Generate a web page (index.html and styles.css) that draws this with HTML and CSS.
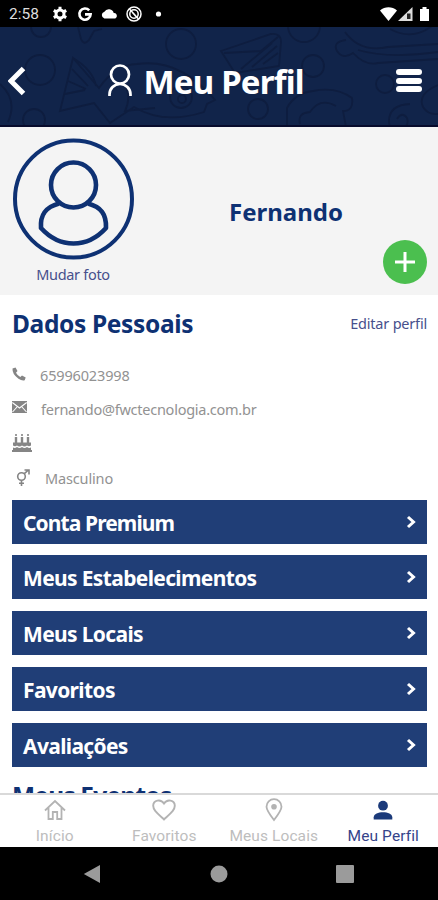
FILE: index.html
```html
<!DOCTYPE html>
<html lang="pt-BR">
<head>
  <meta charset="UTF-8" />
  <meta name="viewport" content="width=device-width, initial-scale=1.0"/>
  <title>Meu Perfil</title>
  <link rel="stylesheet" href="styles.css">
</head>
<body>
  <div class="status-bar">
    <span class="clock">2:58</span>
    <svg class="status-left" width="112" height="18" viewBox="0 0 112 18">
      <!-- settings -->
      <circle cx="9" cy="9" r="4" fill="none" stroke="#fff" stroke-width="3"/>
      <path d="M9 1.8v3M9 13.2v3M2.8 5.4l2.5 1.5M12.7 11.1l2.5 1.5M2.8 12.6l2.5-1.5M12.7 6.9l2.5-1.5" stroke="#fff" stroke-width="3"/>
      <!-- google -->
      <path d="M38.2 5.4A5.6 5.6 0 1 0 39.6 9.3H34" fill="none" stroke="#fff" stroke-width="2.7"/>
      <path d="M53.4 13.4a3.4 3.4 0 0 1 0-6.6 5 5 0 0 1 9.3 1.3 2.8 2.8 0 0 1 1.6 5.3z" fill="#fff"/>
      <circle cx="83" cy="9" r="7" fill="none" stroke="#fff" stroke-width="1.5"/>
      <circle cx="83" cy="9" r="4.2" fill="none" stroke="#fff" stroke-width="1.5"/>
      <path d="M78.500 4l9 10M81.500 7.500l3.500 4" stroke="#fff" stroke-width="1.5"/>
      <circle cx="107.500" cy="9" r="2.600" fill="#fff"/>
    </svg>
    <svg class="status-right" width="52" height="18" viewBox="0 0 52 18">
      <path d="M1 5.500C6 1.200 13 1.200 18 5.500L9.500 16z" fill="#fff"/>
      <path d="M19 16L33.500 2V16z" fill="#ddd"/>
      <path d="M28 8.500h3.500v5.500h-3.500z" fill="#222"/>
      <path d="M41 4h2.500V2h4v2H50v12h-9z" fill="#fff"/>
    </svg>
  </div>

  <header class="header">
    <!-- food doodles behind the title -->
    <svg class="doodles" width="438" height="100" viewBox="0 0 438 100">
      <circle cx="40" cy="43" r="15"/><circle cx="41" cy="0" r="10"/><circle cx="34" cy="93" r="11"/>
      <circle cx="181" cy="17" r="15"/><circle cx="304" cy="-1" r="16"/><circle cx="313" cy="39" r="11"/>
      <circle cx="385" cy="57" r="9"/><circle cx="258" cy="82" r="10"/><circle cx="181" cy="70" r="11"/><circle cx="182" cy="72" r="4"/>
      <path d="M0 57q18 16 8 38M73 31l-13 53 34-8 16 20 24-16q30 18 70 5l3-8 8-4q-35-42-78-36-22 1-38 24zM73 31q20 12 23 28M72 42l16 17M68 54l18 8M65 67l20-4M115 46q20 16 10 38l30-3"/>
      <path d="M78 0l3 12q3 7 8 1l5-9 8-2"/>
      <path d="M221 24l50-17q10-1 10 8l-2 24-44 7-14-22zM224 26l37-2 17-14M241 42l31-26M252 40l25-21M263 37l15-11"/>
      <path d="M345 5q15 21 43 15l50-3M346 13q-14 2-9 11 6 9 16 2 12 13 25 10l60-4M390 2q22 12 42-3M358 23q30 9 80 2"/>
      <path d="M287 98v-17q8-15 26-17 23-5 39 7 2 13-9 13l3 16M300 97q-3-11 10-12 10-15 26-6M438 58q-21 9-15 22 5 8 15 7M410 77q-21 1-21 17 0 10 10 8 11-2 8-11-5-7-10 1"/>
    </svg>
    <svg class="back" width="18" height="30" viewBox="0 0 18 30"><path d="M15.500 2.500L3 15l12.500 12.500" fill="none" stroke="#fff" stroke-width="5"/></svg>
    <div class="title">
      <svg width="24" height="33" viewBox="0 0 24 33"><path d="M1.500 32V30.500A10.500 10.500 0 0 1 22.500 30.500V32" fill="none" stroke="#fff" stroke-width="2.700"/><circle cx="12" cy="10.500" r="9" fill="#11244a" stroke="#fff" stroke-width="2.700"/></svg>
      <h1>Meu Perfil</h1>
    </div>
    <div class="burger"><i></i><i></i><i></i></div>
  </header>

  <section class="profile">
    <div class="photo">
      <svg width="122" height="122" viewBox="0 0 122 122" fill="none" stroke="#0e3173">
        <circle cx="61.500" cy="61" r="58.500" stroke-width="4"/>
        <circle cx="61.500" cy="47" r="22.500" stroke-width="4.600"/>
        <path d="M47 65.500C34 69 28 76 29 90Q43 105.500 61.500 105.500T94 90C94.500 76 89 69 76 65.500" stroke-width="4.600" stroke-linejoin="round"/>
      </svg>
      <span class="change">Mudar foto</span>
    </div>
    <h2 class="name">Fernando</h2>
    <button class="add"><svg width="22" height="22" viewBox="0 0 22 22"><path d="M11 1v20M1 11h20" stroke="#fff" stroke-width="3"/></svg></button>
  </section>

  <main class="content">
    <div class="section-head">
      <h2>Dados Pessoais</h2>
      <a class="edit">Editar perfil</a>
    </div>
    <ul class="info">
      <li>
        <svg width="14" height="14" viewBox="0 0 14 14"><path d="M.5 1.500L3.500.5 5.500 4 4 5.700Q5.500 8.500 8.300 10L10 8.500l3.700 2-1 2.700Q10 14 6.500 11.800 0 7 .5 1.500z" fill="#858585"/></svg>
        <span class="phone">65996023998</span>
      </li>
      <li>
        <svg class="envelope" width="15" height="12" viewBox="0 0 15 12"><path d="M0 0h15v12H0z" fill="#858585"/><path d="M.3 1.500l7.200 5.500 7.200-5.500M.5 11l4.500-5M14.500 11L10 6" fill="none" stroke="#fff" stroke-width="1.100"/></svg>
        <span class="mail">fernando@fwctecnologia.com.br</span>
      </li>
      <li>
        <svg width="20" height="18" viewBox="0 0 20 18"><path d="M4 3v6M10 3v6M16 3v6" stroke="#858585" stroke-width="2.400"/><path d="M4 0v2M10 0v2M16 0v2" stroke="#858585" stroke-width="1.600"/><path d="M1 8.500h18v3q-2 1.500-4 0-2.500 2-5 0-2.500 2-5 0-2 1.500-4 0zM1 13.500q2 1 4-.500 2.500 2 5 0 2.500 2 5 0 2 1.500 4 .5V16h1v2H0v-2h1z" fill="#858585"/></svg>
      </li>
      <li>
        <svg class="gender" width="14" height="17" viewBox="0 0 14 17" fill="none" stroke="#858585" stroke-width="1.600"><circle cx="5.500" cy="7.500" r="3.800"/><path d="M8.300 4.700L12.500 1M8.500 1H13v4.500M5.500 11.300V17M3 14.200h5"/></svg>
        <span class="sex">Masculino</span>
      </li>
    </ul>

    <nav class="menu">
      <a><span class="premium">Conta Premium</span><svg width="11" height="14" viewBox="0 0 11 14"><path d="M2 2L7.500 7 2 12"/></svg></a>
      <a><span>Meus Estabelecimentos</span><svg width="11" height="14" viewBox="0 0 11 14"><path d="M2 2L7.500 7 2 12"/></svg></a>
      <a><span>Meus Locais</span><svg width="11" height="14" viewBox="0 0 11 14"><path d="M2 2L7.500 7 2 12"/></svg></a>
      <a><span>Favoritos</span><svg width="11" height="14" viewBox="0 0 11 14"><path d="M2 2L7.500 7 2 12"/></svg></a>
      <a><span>Avaliações</span><svg width="11" height="14" viewBox="0 0 11 14"><path d="M2 2L7.500 7 2 12"/></svg></a>
    </nav>
    <h2 class="events">Meus Eventos</h2>
  </main>

  <nav class="tabs">
    <a>
      <svg width="22" height="22" viewBox="0 0 22 22" fill="none" stroke="#b3b3b3" stroke-width="1.800"><path d="M1 11.500L11 2l10 9.500M4.500 9v11h4.300v-7h4.400v7h4.300V9"/></svg>
      <span>Início</span>
    </a>
    <a>
      <svg width="24" height="22" viewBox="0 0 24 22" fill="none" stroke="#b3b3b3" stroke-width="1.900"><path d="M12 20.500C5 14 1.200 11 1.200 6.800 1.200 1 8.800-.5 12 4.500 15.200-.5 22.800 1 22.800 6.800 22.800 11 19 14 12 20.500z"/></svg>
      <span>Favoritos</span>
    </a>
    <a>
      <svg width="18" height="24" viewBox="0 0 18 24"><path d="M9 22C4 15.500 1.500 12 1.500 8.700a7.500 7.500 0 0 1 15 0C16.500 12 14 15.500 9 22z" fill="none" stroke="#b3b3b3" stroke-width="1.800"/><circle cx="9" cy="8.700" r="2.800" fill="#b3b3b3"/></svg>
      <span>Meus Locais</span>
    </a>
    <a class="active">
      <svg width="20" height="20" viewBox="0 0 20 20" fill="#1b3a7a"><circle cx="10" cy="5.700" r="4.900"/><path d="M.7 19.500v-2.200C.7 10.500 19.300 10.500 19.300 17.300v2.200z"/></svg>
      <span>Meu Perfil</span>
    </a>
  </nav>

  <div class="android-nav">
    <svg width="18" height="20" viewBox="0 0 18 20"><path d="M17 1v18L.8 10z"/></svg>
    <svg width="18" height="18" viewBox="0 0 18 18"><circle cx="9" cy="9" r="8.500"/></svg>
    <svg width="18" height="18" viewBox="0 0 18 18"><rect width="18" height="18" rx="1"/></svg>
  </div>
</body>
</html>
```
FILE: styles.css
```css
* {
  box-sizing: border-box;
}

body {
  margin: 0;
  height: 900px;
  display: flex;
  flex-direction: column;
  overflow: hidden;
  background: #fff;
  font-family: 'Noto Sans', 'Open Sans', sans-serif;
  color: #0e3173;
}

svg {
  display: block;
  flex: none;
}

h1, h2 {
  margin: 0;
  font-weight: 700;
  white-space: nowrap;
}

.status-bar {
  height: 27px;
  flex: none;
  display: flex;
  align-items: center;
  padding: 1px 10px 0 9px;
  background: #000;
}

.clock {
  width: 42px;
  font: 15.5px Roboto, sans-serif;
  color: #ddd;
}

.status-right {
  margin-left: auto;
  margin-right: -3px;
}

.header {
  position: relative;
  height: 100px;
  flex: none;
  display: flex;
  align-items: center;
  padding: 9px 16px 0 8px;
  background: #11244a;
  border-bottom: 2px solid #070b2c;
  overflow: hidden;
}

.doodles {
  position: absolute;
  left: 0;
  top: 0;
  fill: none;
  stroke: #0e1d3f;
  stroke-width: 1.8;
}

.back, .title, .burger {
  position: relative;
}

.title {
  display: flex;
  align-items: center;
  gap: 11.5px;
  margin-left: 82px;
  color: #fff;
}

.title h1 {
  width: 162px;
  padding-top: 2px;
  font-size: 33px;
  line-height: 40px;
  letter-spacing: -0.8px;
}

.burger {
  display: grid;
  gap: 2.6px;
  margin-left: auto;
}

.burger i {
  width: 26px;
  height: 6px;
  border-radius: 3px;
  background: #fff;
}

.profile {
  height: 168px;
  flex: none;
  display: grid;
  grid-template-columns: 122px 1fr 44px;
  padding: 11px 11px 12px 12px;
  background: #f4f4f4;
}

.change {
  display: block;
  margin-top: 4px;
  text-align: center;
  font-size: 14.5px;
  line-height: 20px;
  letter-spacing: -0.3px;
  color: #47508c;
}

.name {
  padding-top: 58px;
  padding-left: 95px;
  font-size: 24px;
  line-height: 32px;
}

.add {
  width: 44px;
  height: 44px;
  align-self: end;
  display: grid;
  place-items: center;
  padding: 0;
  border: 0;
  border-radius: 50%;
  background: #4bbf4f;
}

.content {
  flex: 1;
  min-height: 0;
  overflow: hidden;
  padding: 12px 11px 0 12px;
}

.section-head {
  display: flex;
  justify-content: space-between;
  align-items: center;
  height: 34px;
}

.section-head h2, .events {
  font-size: 24.5px;
  line-height: 34px;
  letter-spacing: -0.35px;
}

.edit {
  padding-bottom: 2px;
  font-size: 14.5px;
  letter-spacing: -0.2px;
  color: #47508c;
}

.info {
  list-style: none;
  margin: 16px 0 0;
  padding: 0;
  color: #929292;
  font-size: 14.5px;
}

.info li {
  height: 34.4px;
  display: flex;
  align-items: center;
}

.info span {
  line-height: 20px;
  letter-spacing: -0.15px;
}

.phone {
  margin-left: 14px;
  padding-top: 2px;
}

.envelope {
  margin-top: -3px;
}

.info .mail {
  margin-left: 14px;
  letter-spacing: -0.25px;
}

.gender {
  margin-left: 4px;
}

.sex {
  margin-left: 15px;
  padding-top: 2px;
}

.menu {
  display: grid;
  gap: 11.75px;
  margin-top: 5px;
}

.menu a {
  height: 44px;
  display: flex;
  align-items: center;
  justify-content: space-between;
  padding: 2px 10px 0 11px;
  background: #203e77;
  color: #fff;
  font-size: 21px;
  font-weight: 700;
  letter-spacing: -0.65px;
}

.menu .premium {
  letter-spacing: -0.9px;
}

.menu svg {
  margin-top: -2px;
  fill: none;
  stroke: #fff;
  stroke-width: 3;
}

.events {
  margin-top: 12.5px;
  letter-spacing: -0.8px;
}

.tabs {
  height: 54px;
  flex: none;
  display: grid;
  grid-template-columns: repeat(4, 1fr);
  border-top: 2px solid #d9d9d9;
  background: #fff;
}

.tabs a {
  display: grid;
  grid-template-rows: 30px 22px;
  place-items: center;
  font: 15.5px/20px Roboto, sans-serif;
  letter-spacing: 0.1px;
  color: #bdbdbd;
}

.tabs .active {
  color: #35438a;
}

.android-nav {
  height: 53px;
  flex: none;
  display: flex;
  justify-content: space-between;
  align-items: center;
  padding: 0 84px 0 83px;
  background: #000;
}

.android-nav svg {
  fill: #9b9b9b;
}
```
